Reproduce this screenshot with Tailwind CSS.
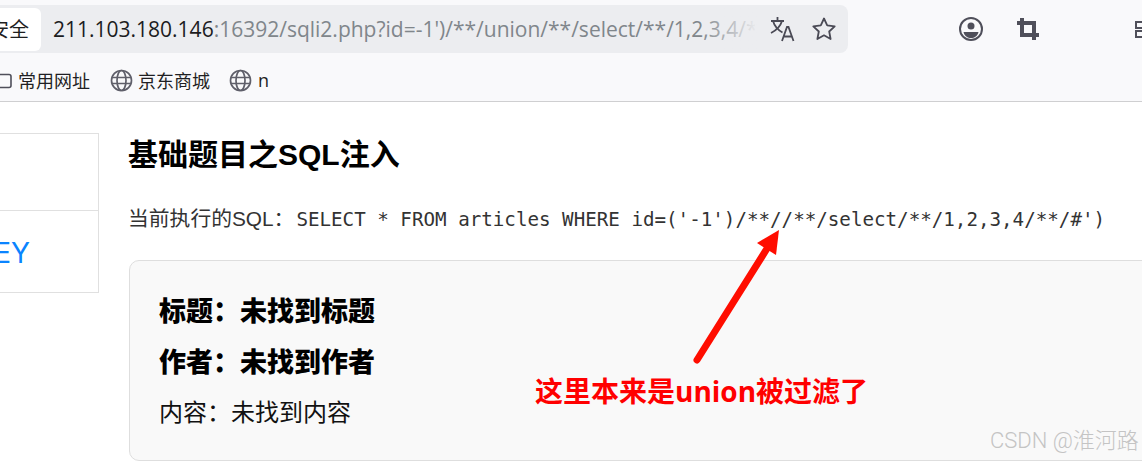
<!DOCTYPE html>
<html lang="zh-CN">
 <head>
  <meta charset="utf-8"/>
  <meta content="width=device-width, initial-scale=1.0" name="viewport"/>
  <title>基础题目之SQL注入</title>
  <script src="https://cdn.jsdelivr.net/npm/@tailwindcss/browser@4"></script>
 </head>
 <body class="relative h-[461px] w-[1142px] overflow-hidden bg-white font-['Noto_Sans_CJK_SC',sans-serif]">
  <!-- browser chrome -->
  <header class="h-[102px] border-b border-[#cfcfd1] bg-[#f9f9fb]">
   <div class="flex h-[58px] items-center">
    <div class="relative flex h-[48px] w-[848px] shrink-0 items-center overflow-hidden rounded-r-lg bg-[#ecedf0]">
     <div class="flex h-[43px] w-[41px] shrink-0 items-center justify-end overflow-hidden rounded-r-md bg-white pr-[12px] text-[20px] whitespace-nowrap text-[#1f1f1f]">不安全</div>
     <div class="ml-[12px] w-[702px] shrink-0 overflow-hidden pt-[1px] font-['Open_Sans',sans-serif] text-[21px] whitespace-nowrap text-[#80868b]"><span class="text-[#1c1c1e]">211.103.180.146</span>:16392/sqli2.php?id=-1')/**/union/**/select/**/1,2,3,4/**/#</div>
     <div class="absolute top-0 left-[700px] h-full w-[58px] bg-linear-to-r from-[#ecedf0]/0 to-[#ecedf0]"></div>
     <svg class="absolute top-[11px] left-[769px]" width="26" height="26" viewBox="0 0 26 26" fill="none" stroke="#4a4a55" stroke-width="1.8"><path d="M2 5h13M8.500 1v4M4 5c1.500 5 5 9 9.500 11.500M13 5c-1.500 5-5 9-11 12"/><path d="M13 25l5-14h1.500l5 14M15 20.500h8"/></svg>
     <svg class="absolute top-[11px] left-[811px]" width="26" height="26" viewBox="0 0 26 26" fill="none" stroke="#4a4a55" stroke-width="1.8" stroke-linejoin="round"><path d="M13 2.500l3.200 6.900 7.500.9-5.500 5.200 1.400 7.500-6.600-3.700-6.600 3.700 1.400-7.500-5.500-5.200 7.500-.9z"/></svg>
    </div>
    <div class="ml-[110px] flex items-center">
     <svg width="26" height="26" viewBox="0 0 26 26" fill="none"><circle cx="13" cy="13" r="11" stroke="#4f4f5a" stroke-width="2"/><circle cx="13" cy="10" r="3.500" fill="#4f4f5a"/><path d="M5.500 16h15c-1 4-4 6-7.500 6s-6.500-2-7.500-6z" fill="#4f4f5a"/></svg>
     <svg class="ml-[32px]" width="24" height="24" viewBox="0 0 24 24" fill="none" stroke="#4f4f5a" stroke-width="4"><path d="M6 1v17h17M1 6h17v17"/></svg>
     <svg class="ml-[95px] shrink-0" width="24" height="24" viewBox="0 0 24 24" fill="none" stroke="#4f4f5a" stroke-width="2"><path d="M1 5h9v6H1zM1 14h9v6H1z"/></svg>
    </div>
   </div>
   <div class="flex h-[43px] items-center pt-[2px] text-[18px] text-[#1f1f23]">
    <svg class="-ml-[3px] shrink-0" width="16" height="16" viewBox="0 0 16 16" fill="none" stroke="#4f4f5a" stroke-width="1.6"><rect x="1" y="1.500" width="13" height="13" rx="2"/></svg>
    <span class="ml-[5px]">常用网址</span>
    <svg class="ml-[20px] shrink-0" width="23" height="23" viewBox="0 0 23 23" fill="none" stroke="#5f5f6a" stroke-width="1.7"><circle cx="11.500" cy="11.500" r="10"/><ellipse cx="11.500" cy="11.500" rx="4.500" ry="10"/><path d="M2 8.500h19M2 14.500h19"/></svg>
    <span class="ml-[5px]">京东商城</span>
    <svg class="ml-[19px] shrink-0" width="23" height="23" viewBox="0 0 23 23" fill="none" stroke="#5f5f6a" stroke-width="1.7"><circle cx="11.500" cy="11.500" r="10"/><ellipse cx="11.500" cy="11.500" rx="4.500" ry="10"/><path d="M2 8.500h19M2 14.500h19"/></svg>
    <span class="ml-[6px] font-['Open_Sans',sans-serif]">n</span>
   </div>
  </header>

  <!-- page -->
  <div class="flex">
   <aside class="mt-[31px] h-[160px] w-[99px] shrink-0 overflow-hidden border-y border-r border-[#e0e0e0]">
    <div class="h-[77px] border-b border-[#e0e0e0]"></div>
    <div class="flex h-[81px] items-center justify-end pt-[2px] pr-[68px] font-['Inter',sans-serif] text-[28px] whitespace-nowrap text-[#0a84ff]">KEY</div>
   </aside>
   <main class="ml-[30px] min-w-0 flex-1">
    <h1 class="mt-[30px] -ml-[1px] h-[46px] font-['Liberation_Sans','Noto_Sans_CJK_SC',sans-serif] text-[30px] leading-[46px] font-bold whitespace-nowrap text-black">基础题目之SQL注入</h1>
    <p class="mt-[23px] -ml-[1px] h-[32px] text-[20.800px] leading-[32px] whitespace-nowrap text-[#333]"><span class="font-['Liberation_Sans','Noto_Sans_CJK_SC',sans-serif]">当前执行的SQL：</span><code class="ml-[2px] font-['DejaVu_Sans_Mono',monospace] text-[19.200px]">SELECT * FROM articles WHERE id=('-1')/**//**/select/**/1,2,3,4/**/#')</code></p>
    <section class="mt-[27px] h-[201px] w-[1100px] rounded-[10px] border border-[#dedede] bg-[#f9f9f9] pt-[26px] pl-[29px]">
     <h2 class="h-[49px] text-[27px] leading-[46px] font-black text-black">标题：未找到标题</h2>
     <h3 class="h-[55px] text-[27px] leading-[50px] font-black text-black">作者：未找到作者</h3>
     <p class="text-[24px] leading-[40px] text-[#111]">内容：未找到内容</p>
    </section>
   </main>
  </div>

  <!-- annotation drawn over the shot -->
  <svg class="absolute top-0 left-0" width="1142" height="461" viewBox="0 0 1142 461" fill="none">
   <path d="M697 360L768 247" stroke="#ff0d00" stroke-width="7" stroke-linecap="round"/>
   <path d="M779 230L757 243L776 255z" fill="#ff0d00"/>
  </svg>
  <div class="absolute top-[371px] left-[535px] text-[28px] leading-[40px] font-bold whitespace-nowrap text-[#ff0000] font-['Open_Sans','Noto_Sans_CJK_SC',sans-serif]">这里本来是union被过滤了</div>
  <div class="absolute top-[426px] left-[990px] text-[22px] leading-[30px] font-light whitespace-nowrap text-[#c4c4c4] font-['Roboto','Noto_Sans_CJK_SC',sans-serif]">CSDN @淮河路</div>
 </body>
</html>
